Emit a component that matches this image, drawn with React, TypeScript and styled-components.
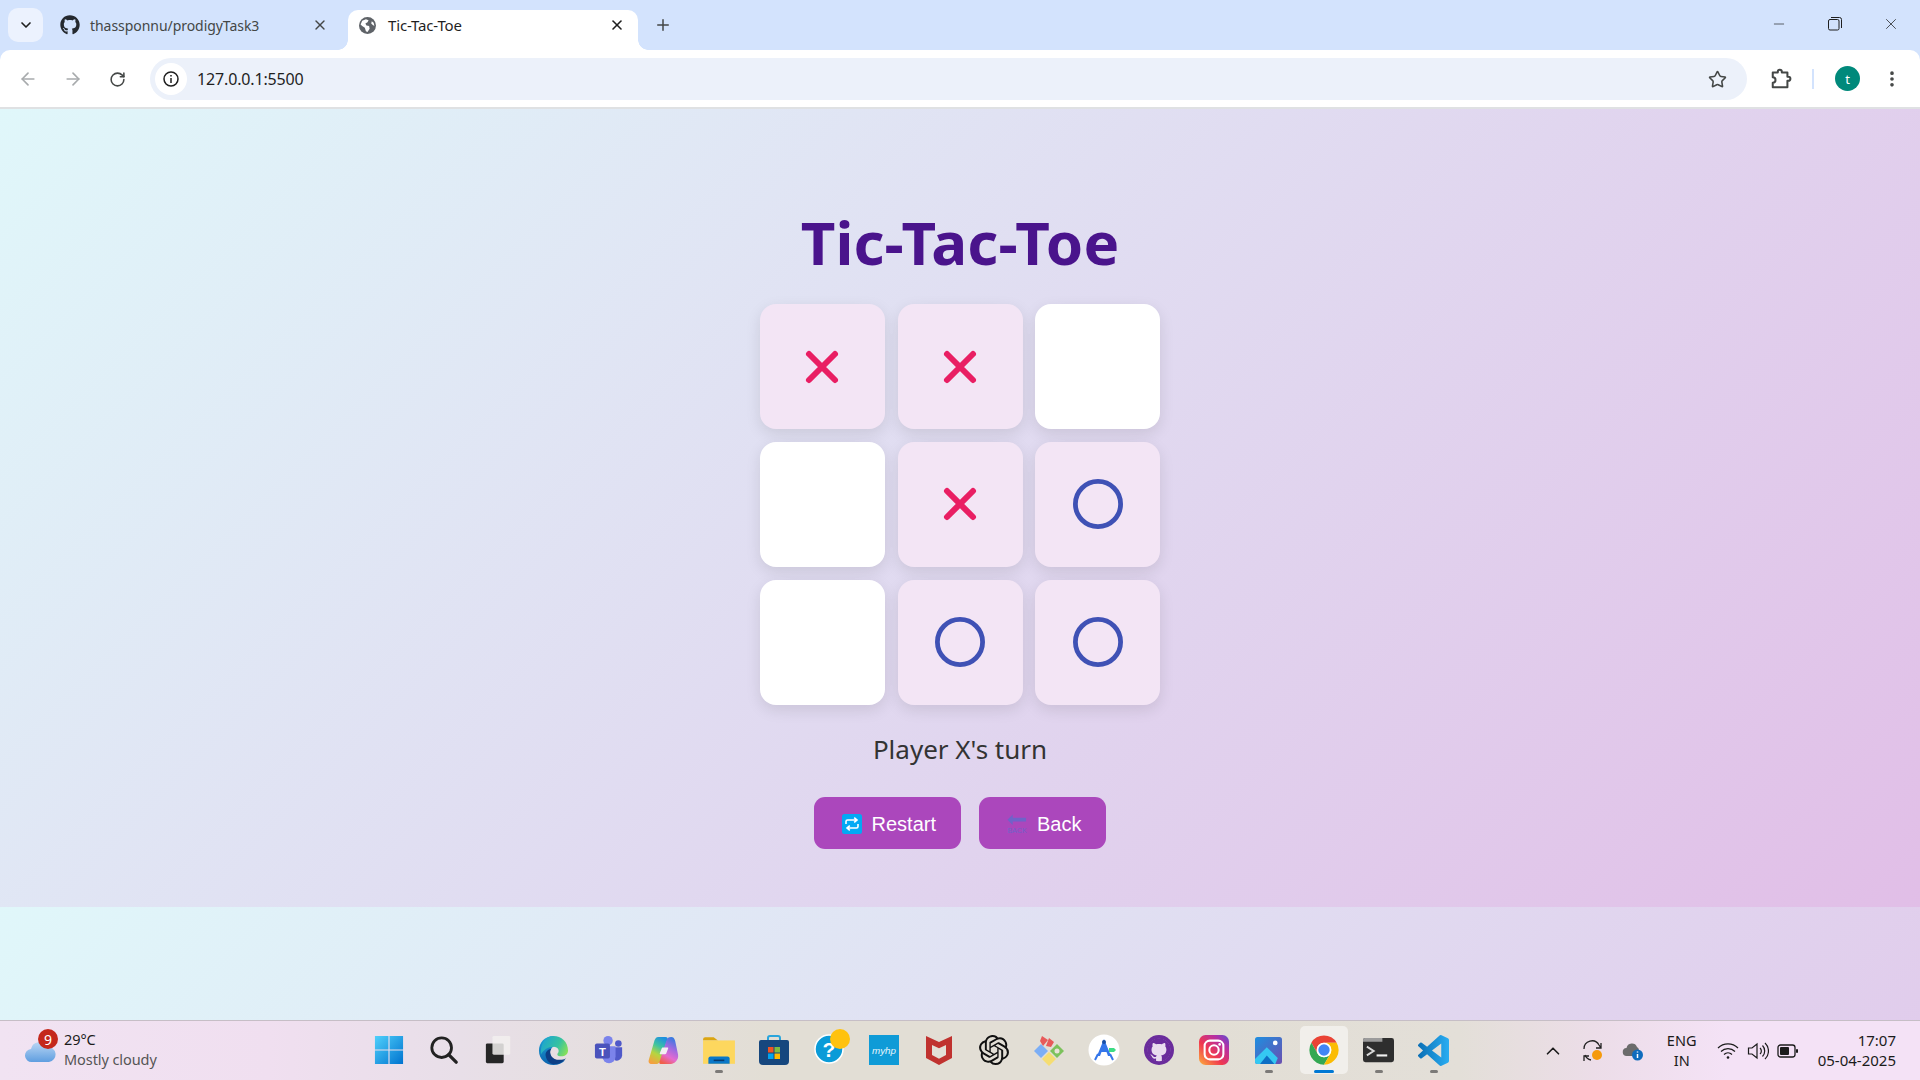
import React from "react";
import styled, { createGlobalStyle } from "styled-components";
import { ArrowLeft, ArrowRight, ChevronDown, ChevronUp, EllipsisVertical, Minus, Plus, RotateCw, Star, X } from "lucide-react";
import { FaGithub } from "react-icons/fa";
import { SiOpenai } from "react-icons/si";

const UI_FONT = `"Noto Sans", "Open Sans", sans-serif`;

const GlobalStyle = createGlobalStyle`
  html, body { margin: 0; padding: 0; height: 100%; overflow: hidden; }
  body { font-family: ${UI_FONT}; }
  * { box-sizing: border-box; }
`;

// --- browser chrome ---
const Screen = styled.div` width: 1920px; height: 1080px; display: flex; flex-direction: column; background: #d3e3fd; `;
const TabStrip = styled.div` height: 50px; flex: none; display: flex; align-items: flex-end; background: #d3e3fd; padding-left: 8px; `;
const TabSearch = styled.div`
  width: 35px; height: 34px; margin-bottom: 8px; border-radius: 10px; background: #ecf2fe; color: #1f1f1f;
  display: flex; align-items: center; justify-content: center;
`;
const Tab = styled.div<{ $active?: boolean }>`
  height: 40px; width: ${p => (p.$active ? "290px" : "305px")};
  padding: 0 ${p => (p.$active ? "13px" : "20px")} 10px ${p => (p.$active ? "11px" : "17px")};
  display: flex; align-items: center; position: relative;
  background: ${p => (p.$active ? "#fff" : "transparent")};
  border-radius: 10px 10px 0 0;
  color: ${p => (p.$active ? "#1f1f1f" : "#444746")};
  font-size: ${p => (p.$active ? "15px" : "14px")};
  letter-spacing: ${p => (p.$active ? "-0.15px" : "-0.05px")};
  ${p => p.$active && `
    &::before, &::after { content: ""; position: absolute; bottom: 0; width: 10px; height: 10px; }
    &::before { left: -10px; background: radial-gradient(circle at 0 0, transparent 9.5px, #fff 10px); }
    &::after { right: -10px; background: radial-gradient(circle at 100% 0, transparent 9.5px, #fff 10px); }
  `}
`;
const TabTitle = styled.span<{ $active?: boolean }>` flex: 1; margin-left: ${p => (p.$active ? "12px" : "10px")}; white-space: nowrap; `;
const NewTab = styled.div` width: 50px; height: 40px; padding-bottom: 10px; display: flex; align-items: center; justify-content: center; color: #444746; `;
const WindowControls = styled.div` margin-left: auto; height: 50px; display: flex; align-items: center; padding-right: 1px; color: #1f1f1f; `;
const WindowButton = styled.div` width: 56px; height: 50px; padding-bottom: 3px; display: flex; align-items: center; justify-content: center; `;

const Toolbar = styled.div`
  height: 59px; flex: none; padding: 1px 0 0 5px; display: flex; align-items: center;
  background: #fff; border-bottom: 2px solid #dfe1e3;
  border-radius: 10px 10px 0 0; color: #444746;
`;
const NavButton = styled.div<{ $muted?: boolean }>`
  width: 45px; height: 40px; display: flex; align-items: center; justify-content: center;
  color: ${p => (p.$muted ? "#a8abad" : "#444746")};
`;
const Omnibox = styled.div`
  width: 1597px; height: 42px; margin-left: 10px; padding: 0 20px 0 5px; display: flex; align-items: center;
  background: #ecf1fa; border-radius: 21px;
`;
const InfoChip = styled.div` width: 32px; height: 32px; border-radius: 50%; background: #fff; display: flex; align-items: center; justify-content: center; `;
const UrlText = styled.span` margin-left: 10px; font-size: 16px; letter-spacing: -0.15px; color: #1f1f1f; flex: 1; `;
const Extensions = styled.div` margin-left: 20px; width: 28px; display: flex; justify-content: center; `;
const ToolbarDivider = styled.div` width: 2px; height: 20px; margin-left: 17px; background: #d3e3fd; `;
const Avatar = styled.div`
  width: 25px; height: 25px; margin-left: 21px; margin-top: -1px; border-radius: 50%; background: #00897b; color: #fff;
  font-size: 13px; display: flex; align-items: center; justify-content: center;
`;
const MoreButton = styled.div` margin-left: 20px; width: 24px; display: flex; justify-content: center; `;

// --- the page itself ---
const Viewport = styled.div`
  flex: 1; min-height: 0;
  background-color: #e0f7fa;
  background-image: linear-gradient(135deg, #e0f7fa, #e1bee7);
  background-size: 100% 798px;
  background-repeat: repeat-y;
`;
const Game = styled.main` height: 798px; display: flex; flex-direction: column; align-items: center; padding-top: 95px; `;
const Title = styled.h1`
  margin: 0; font-size: 60px; line-height: 76px; font-weight: 700; color: #4a148c; letter-spacing: 0.1px;
`;
const Board = styled.div` margin-top: 24px; display: grid; grid-template-columns: repeat(3, 125px); grid-auto-rows: 125px; gap: 12.8px; `;
const Cell = styled.div<{ $filled?: boolean }>`
  display: flex; align-items: center; justify-content: center;
  background: ${p => (p.$filled ? "#f3e5f5" : "#fff")};
  border-radius: 16px;
  box-shadow: 0 5px 15px rgba(0, 0, 0, 0.1);
`;
const Status = styled.p` margin: 25px 0 0; font-size: 26px; line-height: 38px; color: #333; `;
const Actions = styled.div` margin-top: 29px; display: flex; gap: 18px; `;
const ActionButton = styled.button`
  height: 52px; padding: 3px 25px 0 28px; border: 0; border-radius: 11px; background: #ab47bc; color: #fff;
  font-family: "Liberation Sans", Arial, sans-serif; font-size: 20px;
  display: flex; align-items: center; gap: 10px;
`;

const XMark = () => (
  <svg width="36" height="36" viewBox="0 0 36 36">
    <path d="M5 5 L31 31 M31 5 L5 31" stroke="#e91e63" strokeWidth="6" strokeLinecap="round" fill="none" />
  </svg>
);
const OMark = () => (
  <svg width="50" height="50" viewBox="0 0 50 50">
    <circle cx="25" cy="25" r="22.6" stroke="#3f51b5" strokeWidth="4.8" fill="none" />
  </svg>
);
const RepeatEmoji = () => (
  <svg width="20" height="20" viewBox="0 0 20 20">
    <rect width="20" height="20" rx="2.5" fill="#03a9f4" />
    <path d="M4 10V7.500Q4 6 5.500 6H14M12.200 3.600 15 6l-2.800 2.400M16 10v2.500q0 1.500-1.500 1.500H6M7.800 11.600 5 14l2.800 2.400" stroke="#fff" strokeWidth="1.6" fill="none" />
  </svg>
);
const BackEmoji = () => (
  <svg width="20" height="20" viewBox="0 0 21 21">
    <path d="M0.500 6 6 0.500V4H20V8H6v3.500z" fill="#6f63c9" />
    <text x="10.500" y="19.500" textAnchor="middle" fontSize="7.400" fontFamily="Liberation Sans, sans-serif" fill="#6f63c9">BACK</text>
  </svg>
);

// --- taskbar ---
const Taskbar = styled.footer`
  height: 60px; flex: none; display: flex; align-items: center;
  border-top: 1px solid #c6bec6;
  background: linear-gradient(90deg, #f1e3f2 0%, #f0dff0 14%, #e8dfe8 24%, #e2ded5 40%, #e2ded5 62%, #e3dfd8 76%, #ecdde8 83%, #f4e2f6 90%, #f4e2f6 100%);
`;
const Weather = styled.div` width: 361px; flex: none; padding-left: 24px; display: flex; align-items: center; position: relative; `;
const WeatherBadge = styled.span`
  position: absolute; left: 38px; top: -3px; width: 20px; height: 20px; border-radius: 50%;
  background: #c4281c; color: #fff; font-size: 14px; display: flex; align-items: center; justify-content: center;
`;
const WeatherText = styled.div` margin-left: 8px; margin-top: -3px; font-size: 14.5px; line-height: 20px; letter-spacing: -0.08px; color: #1b1b1b; `;
const WeatherNote = styled.div` color: #555; `;
const Pins = styled.div` display: flex; margin-top: -1px; `;
const Pin = styled.div<{ $state?: "running" | "active" }>`
  width: 55px; height: 48px; position: relative; display: flex; align-items: center; justify-content: center;
  &::before {
    content: ""; position: absolute; inset: 0 3.5px; border-radius: 5px;
    background: ${p => (p.$state === "active" ? "rgba(255,255,255,0.5)" : "transparent")};
  }
  &::after {
    content: ""; position: absolute; bottom: 1px; left: 50%; transform: translateX(-50%); border-radius: 2px; height: 3px;
    width: ${p => (p.$state === "active" ? "20px" : p.$state === "running" ? "8px" : "0")};
    background: ${p => (p.$state === "active" ? "#0078d4" : "#7c7a78")};
  }
  & > svg { position: relative; }
`;
const Tray = styled.div` margin-left: auto; padding-right: 24px; display: flex; align-items: center; color: #1b1b1b; `;
const TrayIcon = styled.div<{ $width: number }>` width: ${p => p.$width}px; display: flex; justify-content: center; `;
const Lang = styled.div` width: 50px; margin: -2px 6px 0 4px; text-align: center; font-size: 14.5px; line-height: 20px; `;
const Clock = styled.div` margin: -2px 0 0 15px; text-align: right; font-size: 15px; line-height: 20px; `;

const Svg = ({ size = 32, children }: { size?: number; children: React.ReactNode }) => (
  <svg width={size} height={size} viewBox="0 0 32 32">{children}</svg>
);

const GITHUB_PATH = "M12 .297c-6.63 0-12 5.373-12 12 0 5.303 3.438 9.8 8.205 11.385.6.113.82-.258.82-.577 0-.285-.01-1.04-.015-2.04-3.338.724-4.042-1.61-4.042-1.61C4.422 18.07 3.633 17.7 3.633 17.7c-1.087-.744.084-.729.084-.729 1.205.084 1.838 1.236 1.838 1.236 1.07 1.835 2.809 1.305 3.495.998.108-.776.417-1.305.76-1.605-2.665-.3-5.466-1.332-5.466-5.93 0-1.31.465-2.38 1.235-3.22-.135-.303-.54-1.523.105-3.176 0 0 1.005-.322 3.3 1.23.96-.267 1.98-.399 3-.405 1.02.006 2.04.138 3 .405 2.28-1.552 3.285-1.23 3.285-1.23.645 1.653.24 2.873.12 3.176.765.84 1.23 1.91 1.23 3.22 0 4.61-2.805 5.625-5.475 5.92.42.36.81 1.096.81 2.22 0 1.606-.015 2.896-.015 3.286 0 .315.21.69.825.57C20.565 22.092 24 17.592 24 12.297c0-6.627-5.373-12-12-12";
const VSCODE_PATH = "M23.15 2.587 18.21.21a1.494 1.494 0 0 0-1.705.29l-9.46 8.63-4.12-3.128a.999.999 0 0 0-1.276.057L.327 7.261A1 1 0 0 0 .326 8.74L3.899 12 .326 15.26a1 1 0 0 0 .001 1.479L1.65 17.94a.999.999 0 0 0 1.276.057l4.12-3.128 9.46 8.63a1.492 1.492 0 0 0 1.704.29l4.942-2.377A1.5 1.5 0 0 0 24 20.06V3.939a1.5 1.5 0 0 0-.85-1.352zm-5.146 14.861L10.826 12l7.178-5.448v10.896z";

const GlobeFavicon = () => (
  <svg width="17" height="17" viewBox="0 0 16 16" style={{ flex: "none" }}>
    <circle cx="8" cy="8" r="8" fill="#5f6368" />
    <path d="M3 3.500 6.500 2 9 3 8 5 6 6l1 2 2.500.5.5 2.500-2 3-1.500-.5L5.500 10 3 8.500 1.500 7zM12 4l1.800 1.500.7 3-1.500-1-1.500-1.500z" fill="#fff" />
  </svg>
);
const PuzzleGlyph = () => (
  <svg width="22" height="22" viewBox="0 0 24 24" fill="none" stroke="#444746" strokeWidth="2.200" strokeLinejoin="round">
    <path d="M3 5H8.500V4a2.200 2.200 0 0 1 4.400 0V5H19V9.500h1a2.200 2.200 0 0 1 0 4.500h-1V21H3V16a3 3 0 0 0 0-6Z" />
  </svg>
);
const WinLogo = () => (
  <Svg size={30}>
    <defs><linearGradient id="w" x1="0" y1="0" x2="1" y2="1"><stop offset="0" stopColor="#4fd0fb" /><stop offset="1" stopColor="#0073cf" /></linearGradient></defs>
    <path d="M1 1H15.400V15.400H1zM16.600 1H31V15.400H16.600zM1 16.600H15.400V31H1zM16.600 16.600H31V31H16.600z" fill="url(#w)" />
  </Svg>
);
const SearchGlyph = () => (
  <Svg size={30}>
    <circle cx="13.500" cy="13.500" r="10.500" fill="none" stroke="#222" strokeWidth="3" />
    <path d="M21 21l8 8" stroke="#222" strokeWidth="3.500" strokeLinecap="round" />
  </Svg>
);
const TaskView = () => (
  <Svg size={30}>
    <rect x="2" y="9" width="19" height="21" rx="1.500" fill="#262626" />
    <rect x="9" y="1" width="19" height="20" rx="1.500" fill="#f2f0ee" fillOpacity="0.85" />
  </Svg>
);
const Edge = () => (
  <Svg size={31}>
    <defs>
      <linearGradient id="e1" x1="0" y1="0" x2="0" y2="1"><stop offset="0" stopColor="#1fa6d8" /><stop offset="1" stopColor="#0b62ae" /></linearGradient>
      <linearGradient id="e2" x1="0" y1="0.300" x2="1" y2="0.700"><stop offset="0" stopColor="#1da5cf" /><stop offset="0.600" stopColor="#36c2a0" /><stop offset="1" stopColor="#86e05a" /></linearGradient>
    </defs>
    <path d="M16 1C7 1 1 8 1 16c0 9 7 15 15 15 5 0 9-2 12-5-6 2-13 1-15-5-2-5 1-9 5-10z" fill="url(#e1)" />
    <path d="M16 1c8 0 15 6 15 15 0 4-3 6-7 6s-5-2-3-4c1-2 0-6-5-6-6 0-10 3-13 8C2 10 7 1 16 1z" fill="url(#e2)" />
    <path d="M8 22c1 5 5 9 10 8 4 0 8-2 11-6-5 3-14 2-16-4-1-3 0-5 1-6-4 1-7 4-6 8z" fill="#0d3f86" />
  </Svg>
);
const Teams = () => (
  <Svg size={30}>
    <circle cx="15" cy="6" r="5" fill="#7b83eb" />
    <circle cx="26" cy="9" r="3.500" fill="#5059c9" />
    <path d="M20 13h10v9a6 6 0 0 1-8 5z" fill="#5059c9" />
    <path d="M9 12h14v11a7 7 0 0 1-14 0z" fill="#7b83eb" />
    <rect x="1" y="9" width="16" height="16" rx="2" fill="#4b53bc" />
    <text x="9" y="22" textAnchor="middle" fontSize="12" fontWeight="700" fontFamily="Liberation Sans, sans-serif" fill="#fff">T</text>
  </Svg>
);
const Copilot = () => (
  <Svg size={31}>
    <defs>
      <linearGradient id="c1" x1="0.700" y1="0" x2="0.300" y2="1"><stop offset="0" stopColor="#1e8fe0" /><stop offset="0.350" stopColor="#3fc4a0" /><stop offset="0.650" stopColor="#b7d53f" /><stop offset="1" stopColor="#f5a03f" /></linearGradient>
      <linearGradient id="c2" x1="0.700" y1="0" x2="0.300" y2="1"><stop offset="0" stopColor="#2f7be0" /><stop offset="0.400" stopColor="#a36ae0" /><stop offset="0.700" stopColor="#e56ad0" /><stop offset="1" stopColor="#f0604a" /></linearGradient>
    </defs>
    <path d="M11 2h7c2 0 3 1 2 3l-7 21c-1 3-3 4-5 4H4c-3 0-4-2-3-5L6 8c1-4 2-6 5-6z" fill="url(#c1)" />
    <path d="M22 30h-8c-2 0-3-1-2-3l7-21c1-3 2-4 5-4 2 0 3 1 4 4l3 14c1 6-4 10-9 10z" fill="url(#c2)" />
    <path d="M15 13h5c.8 0 1 .5.8 1l-2 5c-.3.6-.6.8-1.300.8h-4.500c-.8 0-1-.5-.8-1l2-5c.2-.5.5-.8.8-.8z" fill="#f3eff3" />
  </Svg>
);
const Explorer = () => (
  <Svg size={34}>
    <path d="M1 6a2 2 0 0 1 2-2h8l4 3H1z" fill="#dba512" />
    <path d="M1 7h30v22H1z" fill="#fdd75e" />
    <path d="M6 24a2 2 0 0 1 2-2h16a2 2 0 0 1 2 2v5H6z" fill="#0a78c9" />
    <rect x="11" y="25" width="10" height="1.500" fill="#073a6e" />
  </Svg>
);
const Store = () => (
  <Svg size={32}>
    <path d="M10 7V4a2 2 0 0 1 2-2h8a2 2 0 0 1 2 2v3" stroke="#2aa5dc" strokeWidth="2" fill="none" />
    <path d="M1 8a2 2 0 0 1 2-2h26a2 2 0 0 1 2 2v19a4 4 0 0 1-4 4H5a4 4 0 0 1-4-4z" fill="#16477e" />
    <rect x="10" y="13" width="5.500" height="5.500" fill="#f05423" />
    <rect x="16.500" y="13" width="5.500" height="5.500" fill="#7ebb42" />
    <rect x="10" y="19.500" width="5.500" height="5.500" fill="#01a4ef" />
    <rect x="16.500" y="19.500" width="5.500" height="5.500" fill="#ffb901" />
  </Svg>
);
const HelpBubble = () => (
  <svg width="50" height="42" viewBox="0 0 50 42">
    <circle cx="25" cy="20" r="14" fill="#0a9bd8" stroke="#fff" strokeWidth="1.500" />
    <text x="25" y="28" textAnchor="middle" fontSize="21" fontWeight="700" fontFamily="Liberation Sans, sans-serif" fill="#fff">?</text>
    <circle cx="36" cy="10" r="10" fill="#ffc20e" />
  </svg>
);
const MyHp = () => (
  <Svg size={30}>
    <rect width="32" height="32" fill="#0f9bd7" />
    <text x="16" y="20" textAnchor="middle" fontSize="10.500" fontStyle="italic" fontFamily="Liberation Sans, sans-serif" fill="#e8f6fc">myhp</text>
  </Svg>
);
const McAfee = () => (
  <Svg size={32}>
    <path d="M3 2l13 6 13-6v22l-13 7-13-7z" fill="#c0322f" />
    <path d="M9 11l7 3.200L23 11v10l-7 3.800L9 21z" fill="#e3dfd6" />
  </Svg>
);
const GitDiamond = () => (
  <Svg size={32}>
    <path d="M9 2l6 4-5 6-3-5zM16 4l5 4-3 5-5-1z" fill="#e85a5a" />
    <path d="M8 10l7 7-7 7-7-7z" fill="#7caef5" />
    <path d="M24 10l7 7-7 7-7-7z" fill="#7cc25c" />
    <circle cx="24" cy="17" r="2.500" fill="#e8e2d8" />
    <path d="M16 18l7 7-7 7-7-7z" fill="#f5dd72" />
  </Svg>
);
const StudioA = () => (
  <Svg size={32}>
    <circle cx="16" cy="16" r="15.500" fill="#fff" />
    <path d="M16 5l7 17h-3l-1.500-4h-5L12 22H9z" fill="#3476ea" />
    <circle cx="16" cy="8" r="2" fill="#174ea6" />
    <path d="M7 26l3-6M25 26l-3-6" stroke="#3476ea" strokeWidth="2" />
    <path d="M21 14h5l2 2-2 2h-5z" fill="#3ddc84" />
  </Svg>
);
const GithubPurple = () => (
  <Svg size={30}>
    <circle cx="16" cy="16" r="16" fill="#6a2c9c" />
    <circle cx="16" cy="16" r="12" fill="#e9dcef" />
    <g transform="translate(3.500 3.200) scale(1.040)"><path d={GITHUB_PATH} fill="#6a2c9c" /></g>
  </Svg>
);
const Instagram = () => (
  <Svg size={30}>
    <defs>
      <linearGradient id="i" x1="0" y1="1" x2="1" y2="0"><stop offset="0" stopColor="#fdb13b" /><stop offset="0.4" stopColor="#f0384f" /><stop offset="0.75" stopColor="#b52fa5" /><stop offset="1" stopColor="#5a4fd0" /></linearGradient>
    </defs>
    <rect width="32" height="32" rx="7" fill="url(#i)" />
    <rect x="6" y="6" width="20" height="20" rx="5.500" fill="none" stroke="#fff" strokeWidth="2.200" />
    <circle cx="16" cy="16" r="5" fill="none" stroke="#fff" strokeWidth="2.200" />
    <circle cx="22" cy="10" r="1.400" fill="#fff" />
  </Svg>
);
const Photos = () => (
  <Svg size={27}>
    <defs>
      <linearGradient id="p" x1="0" y1="0" x2="1" y2="1"><stop offset="0" stopColor="#1e8fe0" /><stop offset="1" stopColor="#6b4fb0" /></linearGradient>
    </defs>
    <rect width="32" height="32" rx="3" fill="url(#p)" />
    <path d="M0 26 14 12l13 13-3 7H3a3 3 0 0 1-3-3z" fill="#35c8f2" />
    <path d="M6 32l8-10 9 10z" fill="#0f6fc4" />
    <circle cx="24" cy="7" r="2.800" fill="#fff" />
  </Svg>
);
const ChromeLogo = () => (
  <svg width="32" height="32" viewBox="0 0 48 48">
    <path d="M5 13A22 22 0 0 1 43 13L24 13A11 11 0 0 0 14.500 29.500Z" fill="#ea4335" />
    <path d="M5 13A22 22 0 0 0 24 46L33.500 29.500A11 11 0 0 1 14.500 29.500Z" fill="#34a853" />
    <path d="M43 13A22 22 0 0 1 24 46L33.500 29.500A11 11 0 0 0 24 13Z" fill="#fbbc04" />
    <circle cx="24" cy="24" r="11" fill="#fff" />
    <circle cx="24" cy="24" r="8.500" fill="#4285f4" />
  </svg>
);
const TerminalIcon = () => (
  <Svg size={31}>
    <rect y="3" width="32" height="25" rx="2.500" fill="#2e2e2e" />
    <path d="M2 3h18v4H0V5a2 2 0 0 1 2-2z" fill="#9b9b9b" />
    <path d="M4 12l7 4.500L4 21" fill="none" stroke="#d8d8d8" strokeWidth="2" />
    <rect x="14" y="20" width="11" height="2.200" fill="#f0f0f0" />
  </Svg>
);
const VsCode = () => (
  <svg width="31" height="31" viewBox="0 0 24 24">
    <defs>
      <linearGradient id="v" x1="0" y1="0" x2="1" y2="0"><stop offset="0" stopColor="#0b6fb5" /><stop offset="1" stopColor="#29adf2" /></linearGradient>
    </defs>
    <path d={VSCODE_PATH} fill="url(#v)" />
  </svg>
);
const WeatherCloud = () => (
  <svg width="32" height="24" viewBox="0 0 32 24" style={{ flex: "none" }}>
    <defs>
      <linearGradient id="wc" x1="0" y1="0" x2="0" y2="1"><stop offset="0" stopColor="#b9d6f4" /><stop offset="1" stopColor="#5f9ee0" /></linearGradient>
    </defs>
    <circle cx="25" cy="4" r="4" fill="#f0891f" />
    <path d="M8 23a6.500 6.500 0 0 1-1-13 8.500 8.500 0 0 1 16-2 7.500 7.500 0 0 1 2 15z" fill="url(#wc)" />
  </svg>
);
const SyncIcon = () => (
  <svg width="22" height="22" viewBox="0 0 22 22">
    <path d="M2 9A8 8 0 0 1 17 5l2 3M19 3v5h-5M3 15a8 8 0 0 0 6 5" fill="none" stroke="#222" strokeWidth="1.300" />
    <path d="M2 21v-5h5" fill="none" stroke="#222" strokeWidth="1.300" />
    <circle cx="15" cy="15" r="5" fill="#f59a0c" />
  </svg>
);
const CloudInfo = () => (
  <svg width="22" height="22" viewBox="0 0 22 22">
    <path d="M5 16a4 4 0 0 1-.500-8A5.500 5.500 0 0 1 15 7a4 4 0 0 1 2 3v6z" fill="#6b6b6b" />
    <circle cx="15.500" cy="15" r="5.500" fill="#0f6cbd" />
    <path d="M15.500 14v4M15.500 11.500v1" stroke="#fff" strokeWidth="1.500" />
  </svg>
);
const Wifi = () => (
  <svg width="22" height="20" viewBox="0 0 22 20" fill="none" stroke="#1b1b1b" strokeWidth="1.200">
    <path d="M1 7a14 14 0 0 1 20 0M4 10.500a10 10 0 0 1 14 0M7 13.500a6 6 0 0 1 8 0" />
    <circle cx="11" cy="16.500" r="1.300" fill="#1b1b1b" stroke="none" />
  </svg>
);
const Volume = () => (
  <svg width="22" height="20" viewBox="0 0 22 20" fill="none" stroke="#1b1b1b" strokeWidth="1.200">
    <path d="M1.500 7v6h3.500l5 4V3l-5 4z" />
    <path d="M13 7a4 4 0 0 1 0 6M15.500 4.500a8 8 0 0 1 0 11M18 2a11 11 0 0 1 0 16" />
  </svg>
);
const Battery = () => (
  <svg width="22" height="16" viewBox="0 0 22 16">
    <rect x="1" y="2" width="17" height="12" rx="2.500" fill="none" stroke="#1b1b1b" strokeWidth="1.300" />
    <rect x="3" y="4" width="9" height="8" rx="1" fill="#1b1b1b" />
    <rect x="19" y="6" width="2" height="4" rx="1" fill="#1b1b1b" />
  </svg>
);
const RestoreGlyph = () => (
  <svg width="14" height="14" viewBox="0 0 14 14" fill="none" stroke="#1f1f1f" strokeWidth="1">
    <rect x="0.500" y="2.500" width="10.500" height="10.500" rx="1.500" />
    <path d="M3 .500h8.500a2 2 0 0 1 2 2V11" />
  </svg>
);
const InfoGlyph = () => (
  <svg width="16" height="16" viewBox="0 0 16 16" fill="none" stroke="#1f1f1f" strokeWidth="1.500">
    <circle cx="8" cy="8" r="7" />
    <path d="M8 7v5M8 4v1.500" />
  </svg>
);

const board = ["x", "x", "", "", "x", "o", "", "o", "o"];
const pins: { id: string; icon: React.ReactNode; state?: "running" | "active" }[] = [
  { id: "start", icon: <WinLogo /> },
  { id: "search", icon: <SearchGlyph /> },
  { id: "view", icon: <TaskView /> },
  { id: "edge", icon: <Edge /> },
  { id: "teams", icon: <Teams /> },
  { id: "copilot", icon: <Copilot /> },
  { id: "files", icon: <Explorer />, state: "running" },
  { id: "store", icon: <Store /> },
  { id: "help", icon: <HelpBubble /> },
  { id: "myhp", icon: <MyHp /> },
  { id: "mcafee", icon: <McAfee /> },
  { id: "openai", icon: <SiOpenai size={30} color="#111" style={{ position: "relative" }} /> },
  { id: "git", icon: <GitDiamond /> },
  { id: "studio", icon: <StudioA /> },
  { id: "desktop", icon: <GithubPurple /> },
  { id: "insta", icon: <Instagram /> },
  { id: "photos", icon: <Photos />, state: "running" },
  { id: "chrome", icon: <ChromeLogo />, state: "active" },
  { id: "term", icon: <TerminalIcon />, state: "running" },
  { id: "code", icon: <VsCode />, state: "running" },
];

export default function App() {
  return (
    <Screen>
      <GlobalStyle />
      <TabStrip>
        <TabSearch><ChevronDown size={16} strokeWidth={2.5} /></TabSearch>
        <Tab>
          <FaGithub size={20} color="#24292f" style={{ flex: "none" }} />
          <TabTitle>thassponnu/prodigyTask3</TabTitle>
          <X size={16} strokeWidth={2} />
        </Tab>
        <Tab $active>
          <GlobeFavicon />
          <TabTitle $active>Tic-Tac-Toe</TabTitle>
          <X size={16} strokeWidth={2.4} />
        </Tab>
        <NewTab><Plus size={18} strokeWidth={2} /></NewTab>
        <WindowControls>
          <WindowButton><Minus size={16} strokeWidth={1} /></WindowButton>
          <WindowButton><RestoreGlyph /></WindowButton>
          <WindowButton><X size={18} strokeWidth={1} /></WindowButton>
        </WindowControls>
      </TabStrip>
      <Toolbar>
        <NavButton $muted><ArrowLeft size={20} /></NavButton>
        <NavButton $muted><ArrowRight size={20} /></NavButton>
        <NavButton><RotateCw size={17} strokeWidth={2.2} /></NavButton>
        <Omnibox>
          <InfoChip><InfoGlyph /></InfoChip>
          <UrlText>127.0.0.1:5500</UrlText>
          <Star size={19} strokeWidth={2} />
        </Omnibox>
        <Extensions><PuzzleGlyph /></Extensions>
        <ToolbarDivider />
        <Avatar>t</Avatar>
        <MoreButton><EllipsisVertical size={20} strokeWidth={2.4} /></MoreButton>
      </Toolbar>
      <Viewport>
        <Game>
          <Title>Tic-Tac-Toe</Title>
          <Board>
            {board.map((mark, i) => (
              <Cell key={i} $filled={mark !== ""}>
                {mark === "x" && <XMark />}
                {mark === "o" && <OMark />}
              </Cell>
            ))}
          </Board>
          <Status>Player X's turn</Status>
          <Actions>
            <ActionButton><RepeatEmoji />Restart</ActionButton>
            <ActionButton><BackEmoji />Back</ActionButton>
          </Actions>
        </Game>
      </Viewport>
      <Taskbar>
        <Weather>
          <WeatherBadge>9</WeatherBadge>
          <WeatherCloud />
          <WeatherText>
            29°C
            <WeatherNote>Mostly cloudy</WeatherNote>
          </WeatherText>
        </Weather>
        <Pins>
          {pins.map(pin => (
            <Pin key={pin.id} $state={pin.state}>{pin.icon}</Pin>
          ))}
        </Pins>
        <Tray>
          <TrayIcon $width={40}><ChevronUp size={22} strokeWidth={1.8} /></TrayIcon>
          <TrayIcon $width={40}><SyncIcon /></TrayIcon>
          <TrayIcon $width={40}><CloudInfo /></TrayIcon>
          <Lang>ENG<br />IN</Lang>
          <TrayIcon $width={30}><Wifi /></TrayIcon>
          <TrayIcon $width={30}><Volume /></TrayIcon>
          <TrayIcon $width={30}><Battery /></TrayIcon>
          <Clock>17:07<br />05-04-2025</Clock>
        </Tray>
      </Taskbar>
    </Screen>
  );
}
